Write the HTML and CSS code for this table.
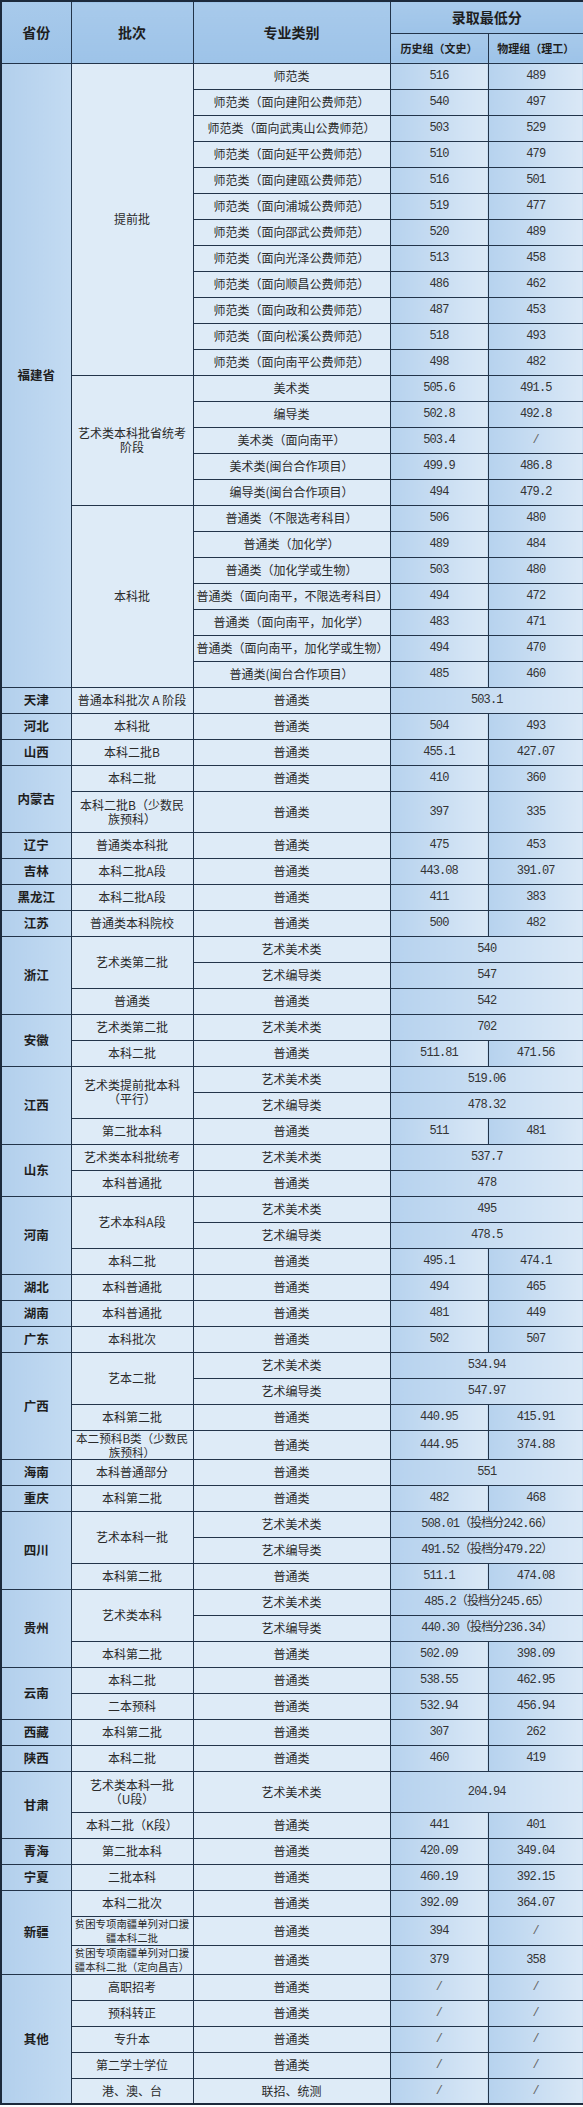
FILE: index.html
```html
<!DOCTYPE html>
<html lang="zh">
<head>
<meta charset="utf-8">
<title>录取最低分</title>
<link rel="stylesheet" href="styles.css">
</head>
<body>
<table class="tbl">
<colgroup><col class="c1"><col class="c2"><col class="c3"><col class="c4"><col class="c5"></colgroup>
<thead>
<tr class="h1"><th rowspan="2">省份</th><th rowspan="2">批次</th><th rowspan="2">专业类别</th><th colspan="2">录取最低分</th></tr>
<tr class="h2"><th class="sub">历史组（文史）</th><th class="sub">物理组（理工）</th></tr>
</thead>
<tbody>
<tr class="n"><td class="prov" rowspan="24">福建省</td><td class="lt" rowspan="12">提前批</td><td class="lt">师范类</td><td class="sc">516</td><td class="sc">489</td></tr>
<tr class="n"><td class="lt">师范类（面向建阳公费师范）</td><td class="sc">540</td><td class="sc">497</td></tr>
<tr class="n"><td class="lt">师范类（面向武夷山公费师范）</td><td class="sc">503</td><td class="sc">529</td></tr>
<tr class="n"><td class="lt">师范类（面向延平公费师范）</td><td class="sc">510</td><td class="sc">479</td></tr>
<tr class="n"><td class="lt">师范类（面向建瓯公费师范）</td><td class="sc">516</td><td class="sc">501</td></tr>
<tr class="n"><td class="lt">师范类（面向浦城公费师范）</td><td class="sc">519</td><td class="sc">477</td></tr>
<tr class="n"><td class="lt">师范类（面向邵武公费师范）</td><td class="sc">520</td><td class="sc">489</td></tr>
<tr class="n"><td class="lt">师范类（面向光泽公费师范）</td><td class="sc">513</td><td class="sc">458</td></tr>
<tr class="n"><td class="lt">师范类（面向顺昌公费师范）</td><td class="sc">486</td><td class="sc">462</td></tr>
<tr class="n"><td class="lt">师范类（面向政和公费师范）</td><td class="sc">487</td><td class="sc">453</td></tr>
<tr class="n"><td class="lt">师范类（面向松溪公费师范）</td><td class="sc">518</td><td class="sc">493</td></tr>
<tr class="n"><td class="lt">师范类（面向南平公费师范）</td><td class="sc">498</td><td class="sc">482</td></tr>
<tr class="n"><td class="lt" rowspan="5">艺术类本科批省统考阶段</td><td class="lt">美术类</td><td class="sc">505.6</td><td class="sc">491.5</td></tr>
<tr class="n"><td class="lt">编导类</td><td class="sc">502.8</td><td class="sc">492.8</td></tr>
<tr class="n"><td class="lt">美术类（面向南平）</td><td class="sc">503.4</td><td class="sc sl">/</td></tr>
<tr class="n"><td class="lt">美术类(闽台合作项目）</td><td class="sc">499.9</td><td class="sc">486.8</td></tr>
<tr class="n"><td class="lt">编导类(闽台合作项目）</td><td class="sc">494</td><td class="sc">479.2</td></tr>
<tr class="n"><td class="lt" rowspan="7">本科批</td><td class="lt">普通类（不限选考科目）</td><td class="sc">506</td><td class="sc">480</td></tr>
<tr class="n"><td class="lt">普通类（加化学）</td><td class="sc">489</td><td class="sc">484</td></tr>
<tr class="n"><td class="lt">普通类（加化学或生物）</td><td class="sc">503</td><td class="sc">480</td></tr>
<tr class="n"><td class="lt">普通类（面向南平，不限选考科目）</td><td class="sc">494</td><td class="sc">472</td></tr>
<tr class="n"><td class="lt">普通类（面向南平，加化学）</td><td class="sc">483</td><td class="sc">471</td></tr>
<tr class="n"><td class="lt">普通类（面向南平，加化学或生物）</td><td class="sc">494</td><td class="sc">470</td></tr>
<tr class="n"><td class="lt">普通类(闽台合作项目）</td><td class="sc">485</td><td class="sc">460</td></tr>

<tr class="n"><td class="prov">天津</td><td class="lt">普通本科批次 A 阶段</td><td class="lt">普通类</td><td class="sc" colspan="2">503.1</td></tr>
<tr class="n"><td class="prov">河北</td><td class="lt">本科批</td><td class="lt">普通类</td><td class="sc">504</td><td class="sc">493</td></tr>
<tr class="n"><td class="prov">山西</td><td class="lt">本科二批B</td><td class="lt">普通类</td><td class="sc">455.1</td><td class="sc">427.07</td></tr>
<tr class="n"><td class="prov" rowspan="2">内蒙古</td><td class="lt">本科二批</td><td class="lt">普通类</td><td class="sc">410</td><td class="sc">360</td></tr>
<tr class="t"><td class="lt">本科二批B（少数民族预科）</td><td class="lt">普通类</td><td class="sc">397</td><td class="sc">335</td></tr>
<tr class="n"><td class="prov">辽宁</td><td class="lt">普通类本科批</td><td class="lt">普通类</td><td class="sc">475</td><td class="sc">453</td></tr>
<tr class="n"><td class="prov">吉林</td><td class="lt">本科二批A段</td><td class="lt">普通类</td><td class="sc">443.08</td><td class="sc">391.07</td></tr>
<tr class="n"><td class="prov">黑龙江</td><td class="lt">本科二批A段</td><td class="lt">普通类</td><td class="sc">411</td><td class="sc">383</td></tr>
<tr class="n"><td class="prov">江苏</td><td class="lt">普通类本科院校</td><td class="lt">普通类</td><td class="sc">500</td><td class="sc">482</td></tr>
<tr class="n"><td class="prov" rowspan="3">浙江</td><td class="lt" rowspan="2">艺术类第二批</td><td class="lt">艺术美术类</td><td class="sc" colspan="2">540</td></tr>
<tr class="n"><td class="lt">艺术编导类</td><td class="sc" colspan="2">547</td></tr>
<tr class="n"><td class="lt">普通类</td><td class="lt">普通类</td><td class="sc" colspan="2">542</td></tr>
<tr class="n"><td class="prov" rowspan="2">安徽</td><td class="lt">艺术类第二批</td><td class="lt">艺术美术类</td><td class="sc" colspan="2">702</td></tr>
<tr class="n"><td class="lt">本科二批</td><td class="lt">普通类</td><td class="sc">511.81</td><td class="sc">471.56</td></tr>
<tr class="n"><td class="prov" rowspan="3">江西</td><td class="lt" rowspan="2">艺术类提前批本科（平行）</td><td class="lt">艺术美术类</td><td class="sc" colspan="2">519.06</td></tr>
<tr class="n"><td class="lt">艺术编导类</td><td class="sc" colspan="2">478.32</td></tr>
<tr class="n"><td class="lt">第二批本科</td><td class="lt">普通类</td><td class="sc">511</td><td class="sc">481</td></tr>
<tr class="n"><td class="prov" rowspan="2">山东</td><td class="lt">艺术类本科批统考</td><td class="lt">艺术美术类</td><td class="sc" colspan="2">537.7</td></tr>
<tr class="n"><td class="lt">本科普通批</td><td class="lt">普通类</td><td class="sc" colspan="2">478</td></tr>
<tr class="n"><td class="prov" rowspan="3">河南</td><td class="lt" rowspan="2">艺术本科A段</td><td class="lt">艺术美术类</td><td class="sc" colspan="2">495</td></tr>
<tr class="n"><td class="lt">艺术编导类</td><td class="sc" colspan="2">478.5</td></tr>
<tr class="n"><td class="lt">本科二批</td><td class="lt">普通类</td><td class="sc">495.1</td><td class="sc">474.1</td></tr>
<tr class="n"><td class="prov">湖北</td><td class="lt">本科普通批</td><td class="lt">普通类</td><td class="sc">494</td><td class="sc">465</td></tr>
<tr class="n"><td class="prov">湖南</td><td class="lt">本科普通批</td><td class="lt">普通类</td><td class="sc">481</td><td class="sc">449</td></tr>
<tr class="n"><td class="prov">广东</td><td class="lt">本科批次</td><td class="lt">普通类</td><td class="sc">502</td><td class="sc">507</td></tr>
<tr class="n"><td class="prov" rowspan="4">广西</td><td class="lt" rowspan="2">艺本二批</td><td class="lt">艺术美术类</td><td class="sc" colspan="2">534.94</td></tr>
<tr class="n"><td class="lt">艺术编导类</td><td class="sc" colspan="2">547.97</td></tr>
<tr class="n"><td class="lt">本科第二批</td><td class="lt">普通类</td><td class="sc">440.95</td><td class="sc">415.91</td></tr>
<tr class="n"><td class="lt tight">本二预科B类（少数民族预科）</td><td class="lt">普通类</td><td class="sc">444.95</td><td class="sc">374.88</td></tr>
<tr class="n"><td class="prov">海南</td><td class="lt">本科普通部分</td><td class="lt">普通类</td><td class="sc" colspan="2">551</td></tr>
<tr class="n"><td class="prov">重庆</td><td class="lt">本科第二批</td><td class="lt">普通类</td><td class="sc">482</td><td class="sc">468</td></tr>
<tr class="n"><td class="prov" rowspan="3">四川</td><td class="lt" rowspan="2">艺术本科一批</td><td class="lt">艺术美术类</td><td class="sc" colspan="2">508.01（投档分242.66）</td></tr>
<tr class="n"><td class="lt">艺术编导类</td><td class="sc" colspan="2">491.52（投档分479.22）</td></tr>
<tr class="n"><td class="lt">本科第二批</td><td class="lt">普通类</td><td class="sc">511.1</td><td class="sc">474.08</td></tr>
<tr class="n"><td class="prov" rowspan="3">贵州</td><td class="lt" rowspan="2">艺术类本科</td><td class="lt">艺术美术类</td><td class="sc" colspan="2">485.2（投档分245.65）</td></tr>
<tr class="n"><td class="lt">艺术编导类</td><td class="sc" colspan="2">440.30（投档分236.34）</td></tr>
<tr class="n"><td class="lt">本科第二批</td><td class="lt">普通类</td><td class="sc">502.09</td><td class="sc">398.09</td></tr>
<tr class="n"><td class="prov" rowspan="2">云南</td><td class="lt">本科二批</td><td class="lt">普通类</td><td class="sc">538.55</td><td class="sc">462.95</td></tr>
<tr class="n"><td class="lt">二本预科</td><td class="lt">普通类</td><td class="sc">532.94</td><td class="sc">456.94</td></tr>
<tr class="n"><td class="prov">西藏</td><td class="lt">本科第二批</td><td class="lt">普通类</td><td class="sc">307</td><td class="sc">262</td></tr>
<tr class="n"><td class="prov">陕西</td><td class="lt">本科二批</td><td class="lt">普通类</td><td class="sc">460</td><td class="sc">419</td></tr>
<tr class="t"><td class="prov" rowspan="2">甘肃</td><td class="lt">艺术类本科一批<br>（U段）</td><td class="lt">艺术美术类</td><td class="sc" colspan="2">204.94</td></tr>
<tr class="n"><td class="lt">本科二批（K段）</td><td class="lt">普通类</td><td class="sc">441</td><td class="sc">401</td></tr>
<tr class="n"><td class="prov">青海</td><td class="lt">第二批本科</td><td class="lt">普通类</td><td class="sc">420.09</td><td class="sc">349.04</td></tr>
<tr class="n"><td class="prov">宁夏</td><td class="lt">二批本科</td><td class="lt">普通类</td><td class="sc">460.19</td><td class="sc">392.15</td></tr>
<tr class="n"><td class="prov" rowspan="3">新疆</td><td class="lt">本科二批次</td><td class="lt">普通类</td><td class="sc">392.09</td><td class="sc">364.07</td></tr>
<tr class="n"><td class="lt sm">贫困专项南疆单列对口援疆本科二批</td><td class="lt">普通类</td><td class="sc">394</td><td class="sc sl">/</td></tr>
<tr class="n"><td class="lt sm">贫困专项南疆单列对口援疆本科二批（定向昌吉）</td><td class="lt">普通类</td><td class="sc">379</td><td class="sc">358</td></tr>
<tr class="n"><td class="prov" rowspan="5">其他</td><td class="lt">高职招考</td><td class="lt">普通类</td><td class="sc sl">/</td><td class="sc sl">/</td></tr>
<tr class="n"><td class="lt">预科转正</td><td class="lt">普通类</td><td class="sc sl">/</td><td class="sc sl">/</td></tr>
<tr class="n"><td class="lt">专升本</td><td class="lt">普通类</td><td class="sc sl">/</td><td class="sc sl">/</td></tr>
<tr class="n"><td class="lt">第二学士学位</td><td class="lt">普通类</td><td class="sc sl">/</td><td class="sc sl">/</td></tr>
<tr class="n"><td class="lt">港、澳、台</td><td class="lt">联招、统测</td><td class="sc sl">/</td><td class="sc sl">/</td></tr>
</tbody>
</table>
</body>
</html>
```

FILE: styles.css
```css
html, body {
  margin: 0;
  padding: 0;
  background: #ffffff;
}

.tbl {
  width: 583px;
  border-collapse: collapse;
  table-layout: fixed;
  font-family: "Noto Sans CJK SC", sans-serif;
  font-size: 12px;
  color: #2a2a2a;
  border: 2px solid #1c2a3c;
}

.c1 { width: 70px; }
.c2 { width: 122px; }
.c3 { width: 197px; }
.c4 { width: 98px; }
.c5 { width: 96px; }

.tbl th,
.tbl td {
  border: 1.5px solid #22344a;
  text-align: center;
  vertical-align: middle;
  padding: 0 3px;
  line-height: 14px;
  overflow: hidden;
}

.tbl th {
  background: linear-gradient(180deg, #a8caeb 0%, #9dc3e8 100%);
  font-size: 14px;
  font-weight: 700;
  color: #1e1e1e;
}

.tbl th.sub {
  font-size: 11px;
}

.h1 { height: 32px; }
.h2 { height: 30px; }
.n { height: 26px; }
.t { height: 41px; }

.prov {
  background: linear-gradient(90deg, #b2cfec 0%, #c3dbf2 100%);
  font-weight: 700;
  font-size: 12.5px;
  color: #1e1e1e;
}

.lt {
  background: #deebf7;
}

.sc {
  background: linear-gradient(90deg, #b6d2ee 0%, #dae8f6 100%);
  font-family: "Liberation Mono", "Noto Sans CJK SC", monospace;
  font-size: 12px;
  letter-spacing: -0.9px;
  color: #333333;
}

.sl {
  color: #666666;
}

.sm {
  font-size: 10.4px;
  line-height: 11.5px;
  padding: 0 1px;
}

.tight {
  padding: 0 2px;
  font-size: 11.6px;
  line-height: 11.5px;
}
```
